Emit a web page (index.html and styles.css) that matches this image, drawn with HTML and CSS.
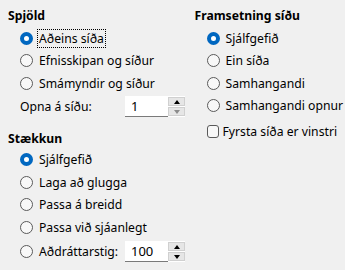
FILE: index.html
```html
<!DOCTYPE html>
<html>
<head>
<meta charset="utf-8">
<link rel="stylesheet" href="styles.css">
</head>
<body>
<div class="page">
  <div class="col left">
    <div class="heading">Spjöld</div>
    <div class="row"><span class="radio on"></span><span class="label focus">Aðeins síða</span></div>
    <div class="row"><span class="radio"></span><span class="label">Efnisskipan og síður</span></div>
    <div class="row"><span class="radio"></span><span class="label">Smámyndir og síður</span></div>
    <div class="row spinrow">
      <span class="plain">Opna á síðu:</span>
      <div class="spin">
        <div class="field">1</div>
        <div class="btns">
          <div class="btn"><span class="up"></span></div>
          <div class="btn"><span class="down dis"></span></div>
        </div>
      </div>
    </div>
    <div class="heading h2">Stækkun</div>
    <div class="row"><span class="radio on"></span><span class="label">Sjálfgefið</span></div>
    <div class="row"><span class="radio"></span><span class="label">Laga að glugga</span></div>
    <div class="row"><span class="radio"></span><span class="label">Passa á breidd</span></div>
    <div class="row"><span class="radio"></span><span class="label">Passa við sjáanlegt</span></div>
    <div class="row spinrow last">
      <span class="radio"></span><span class="label zoomlabel">Aðdráttarstig:</span>
      <div class="spin">
        <div class="field">100</div>
        <div class="btns">
          <div class="btn"><span class="up"></span></div>
          <div class="btn"><span class="down"></span></div>
        </div>
      </div>
    </div>
  </div>
  <div class="col right">
    <div class="heading">Framsetning síðu</div>
    <div class="row"><span class="radio on"></span><span class="label">Sjálfgefið</span></div>
    <div class="row"><span class="radio"></span><span class="label">Ein síða</span></div>
    <div class="row"><span class="radio"></span><span class="label">Samhangandi</span></div>
    <div class="row"><span class="radio"></span><span class="label">Samhangandi opnur</span></div>
    <div class="row check"><span class="box"></span><span class="label">Fyrsta síða er vinstri</span></div>
  </div>
</div>
</body>
</html>
```
FILE: styles.css
```css
html, body {
  margin: 0;
  padding: 0;
  background: #f0f0f0;
}
body {
  font-family: "Noto Sans", "Open Sans", sans-serif;
  font-size: 12.2px;
  color: #000;
  width: 345px;
  height: 270px;
  overflow: hidden;
}
.page {
  display: flex;
  padding: 8px 0 0 8px;
}
.col {
  display: flex;
  flex-direction: column;
}
.left {
  width: 190px;
}
.heading {
  font-weight: bold;
  height: 16px;
  line-height: 16px;
  margin-bottom: 3px;
}
.h2 {
  margin-top: 12px;
  margin-bottom: 2px;
}
.row {
  display: flex;
  align-items: center;
  height: 22.5px;
  padding-left: 12px;
}
.radio {
  box-sizing: border-box;
  width: 13px;
  height: 13px;
  border-radius: 50%;
  border: 1px solid #5a5a5a;
  background: #f8f8f8;
  flex: none;
}
.radio.on {
  border: 4px solid #0067c0;
  background: #fff;
}
.label {
  margin-left: 4px;
  line-height: 15px;
  padding: 1px 1px;
  border: 1px solid transparent;
  white-space: nowrap;
}
.label.focus {
  border: 1px dotted #000;
}
.spinrow {
  height: 24px;
}
.plain {
  width: 105px;
}
.zoomlabel {
  width: 84px;
}
.last {
  margin-top: 1px;
}
.spin {
  display: flex;
  height: 21px;
}
.field {
  box-sizing: border-box;
  width: 43px;
  height: 21px;
  background: #fff;
  border-bottom: 1px solid #7a7a7a;
  padding-left: 6px;
  line-height: 20px;
  font-size: 13px;
}
.btns {
  display: flex;
  flex-direction: column;
  justify-content: center;
  gap: 1px;
  width: 17px;
  background: #fff;
  padding: 1px 0;
  box-sizing: border-box;
}
.btn {
  box-sizing: border-box;
  height: 9px;
  background: #e6e6e6;
  border: 1px solid #d0d0d0;
  display: flex;
  align-items: center;
  justify-content: center;
}
.up {
  width: 0;
  height: 0;
  border-left: 3.5px solid transparent;
  border-right: 3.5px solid transparent;
  border-bottom: 4px solid #000;
}
.down {
  width: 0;
  height: 0;
  border-left: 3.5px solid transparent;
  border-right: 3.5px solid transparent;
  border-top: 4px solid #000;
}
.down.dis {
  border-top-color: #8c8c8c;
}
.check {
  margin-top: 3px;
}
.box {
  box-sizing: border-box;
  width: 12px;
  height: 13px;
  border: 1px solid #5a5a5a;
  border-radius: 3px;
  background: #f8f8f8;
  flex: none;
}
.check .label {
  margin-left: 2px;
}
```
